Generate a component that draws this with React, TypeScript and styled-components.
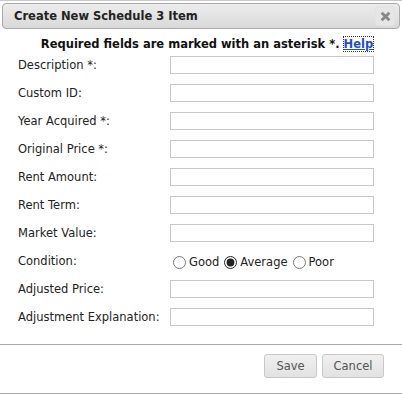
import React from 'react'
import styled, { createGlobalStyle } from 'styled-components'

const GlobalStyle = createGlobalStyle`
    html, body {
        margin: 0;
        padding: 0;
        background: #fff;
    }
    body {
        font-family: "DejaVu Sans", Verdana, sans-serif;
        font-size: 11.5px;
        color: #222;
    }
`

const Dialog = styled.div`
    width: 402px;
    height: 394px;
    box-sizing: border-box;
    border-top: 1px solid #c8c8c8;
    padding: 2px 2px 0 2px;
    display: flex;
    flex-direction: column;
`

const TitleBar = styled.div`
    height: 24px;
    flex-shrink: 0;
    border: 1px solid #aaaaaa;
    border-radius: 4px;
    background: linear-gradient(#ececec, #d9d9d9);
    display: flex;
    align-items: center;
    justify-content: space-between;
    padding: 0 4px 0 11px;
`

const Title = styled.span`
    font-weight: bold;
    color: #222;
`

const CloseButton = styled.button`
    width: 20px;
    height: 20px;
    padding: 0;
    border: 1px solid #e2e2e2;
    border-radius: 3px;
    background: #e6e6e6;
    display: flex;
    align-items: center;
    justify-content: center;
    cursor: pointer;
`

const Body = styled.div`
    flex: 1;
    padding: 8px 0 0 0;
`

const Required = styled.div`
    text-align: center;
    font-weight: bold;
    color: #111;
    padding-left: 12px;
    margin-bottom: 4px;
    line-height: 15px;
`

const HelpLink = styled.a`
    color: #1a4fd6;
    text-decoration: underline;
    outline: 1px dotted #333;
    outline-offset: 0;
`

const Form = styled.div`
    display: grid;
    grid-template-columns: 152px 204px;
    grid-auto-rows: 28px;
    padding-left: 16px;
    align-items: start;
`

const Label = styled.label`
    line-height: 19px;
    color: #222;
`

const Input = styled.input`
    box-sizing: border-box;
    width: 204px;
    height: 18px;
    border: 1px solid #c8c8c8;
    margin: 0;
    padding: 0 2px;
`

const RadioRow = styled.div`
    display: flex;
    align-items: center;
    height: 20px;
    margin-top: 0;
    margin-left: 3px;
`

const RadioOption = styled.label`
    display: flex;
    align-items: center;
    margin-right: 5px;
    color: #222;
`

const Radio = styled.input`
    width: 13px;
    height: 13px;
    margin: 0 3px 0 0;
    accent-color: #222;
`

const Footer = styled.div`
    box-sizing: border-box;
    flex-shrink: 0;
    border-top: 1px solid #a8a8a8;
    border-bottom: 1px solid #a8a8a8;
    margin: 0 -2px;
    height: 50px;
    display: flex;
    justify-content: flex-end;
    align-items: flex-start;
    padding: 9px 18px 0 0;
    gap: 5px;
`

const Button = styled.button<{ w: number }>`
    width: ${(p) => p.w}px;
    height: 24px;
    border: 1px solid #c8c8c8;
    border-radius: 3px;
    background: linear-gradient(#f0f0f0, #e2e2e2);
    color: #555;
    font-family: "DejaVu Sans", Verdana, sans-serif;
    font-size: 11.5px;
    padding: 0;
    cursor: pointer;
`

const fields = [
    'Description *:',
    'Custom ID:',
    'Year Acquired *:',
    'Original Price *:',
    'Rent Amount:',
    'Rent Term:',
    'Market Value:',
]

const App = () => {
    return (
        <>
            <GlobalStyle />
            <Dialog>
                <TitleBar>
                    <Title>Create New Schedule 3 Item</Title>
                    <CloseButton>
                        <svg width="11" height="11" viewBox="0 0 10 10">
                            <path d="M1.5 1.5 L8.5 8.5 M8.5 1.5 L1.5 8.5" stroke="#888" strokeWidth="2.6" />
                        </svg>
                    </CloseButton>
                </TitleBar>
                <Body>
                    <Required>
                        Required fields are marked with an asterisk *. <HelpLink href="#">Help</HelpLink>
                    </Required>
                    <Form>
                        {fields.map((f) => (
                            <React.Fragment key={f}>
                                <Label>{f}</Label>
                                <Input type="text" />
                            </React.Fragment>
                        ))}
                        <Label>Condition:</Label>
                        <RadioRow>
                            <RadioOption><Radio type="radio" name="cond" />Good</RadioOption>
                            <RadioOption><Radio type="radio" name="cond" defaultChecked />Average</RadioOption>
                            <RadioOption><Radio type="radio" name="cond" />Poor</RadioOption>
                        </RadioRow>
                        <Label>Adjusted Price:</Label>
                        <Input type="text" />
                        <Label>Adjustment Explanation:</Label>
                        <Input type="text" />
                    </Form>
                </Body>
                <Footer>
                    <Button w={53}>Save</Button>
                    <Button w={62}>Cancel</Button>
                </Footer>
            </Dialog>
        </>
    )
}

export default App
